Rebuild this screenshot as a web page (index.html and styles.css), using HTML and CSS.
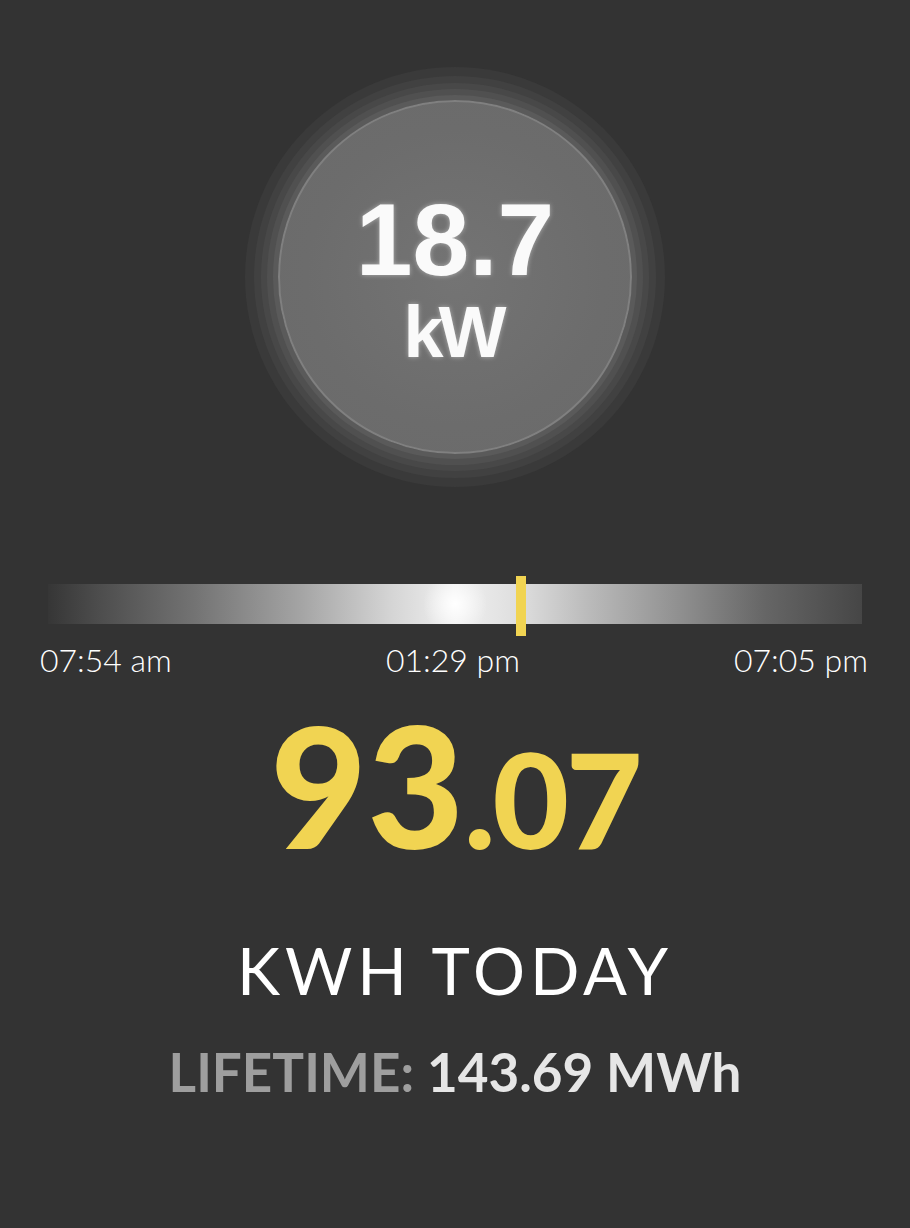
FILE: index.html
```html
<!DOCTYPE html>
<html>

<head>
    <title>Solar Production</title>
    <link rel="stylesheet" href="styles.css">
</head>

<body>
    <div class="gauge">
        <div class="gauge-circle">
            <div class="power-value">18.7</div>
            <div class="power-unit">kW</div>
        </div>
    </div>

    <div class="timeline">
        <div class="sun-bar">
            <div class="now-marker"></div>
        </div>
        <div class="time-labels">
            <span>07:54 am</span>
            <span>01:29 pm</span>
            <span>07:05 pm</span>
        </div>
    </div>

    <div class="energy">
        <div class="energy-value"><span class="whole">93</span><span class="fraction">.07</span></div>
        <div class="energy-label">KWH TODAY</div>
        <div class="lifetime"><span class="lifetime-label">LIFETIME:</span> 143.69 MWh</div>
    </div>
</body>

</html>
```

FILE: styles.css
```css
body {
    margin: 0;
    background-color: #333333;
    font-family: "Lato", "Open Sans", sans-serif;
    color: #fff;
}

/* power gauge */
.gauge {
    display: flex;
    justify-content: center;
    padding-top: 100px;
}

.gauge-circle {
    width: 354px;
    height: 354px;
    box-sizing: border-box;
    border-radius: 50%;
    border: 2px solid #808080;
    background: radial-gradient(circle, #747474 0%, #6c6c6c 60%, #6a6a6a 100%);
    box-shadow:
        0 0 0 5px #5a5a5a,
        0 0 0 11px #505050,
        0 0 0 17px #484848,
        0 0 0 24px #414141,
        0 0 0 33px #3a3a3a;
    display: flex;
    flex-direction: column;
    align-items: center;
    justify-content: center;
    gap: 5px;
    padding-top: 2px;
    font-family: "Liberation Sans", Arial, sans-serif;
    font-weight: bold;
    color: #fafafa;
    text-shadow: 0 0 5px rgba(255, 255, 255, 0.45);
}

.power-value {
    font-size: 102px;
    line-height: 1;
}

.power-unit {
    font-size: 72px;
    line-height: 1;
    letter-spacing: -5px;
    text-indent: -5px;
}

/* daylight bar */
.timeline {
    margin-top: 130px;
}

.sun-bar {
    position: relative;
    margin: 0 48px;
    height: 40px;
    background:
        radial-gradient(circle at 50% 50%, #ffffff 0, rgba(255, 255, 255, 0) 32px),
        linear-gradient(to right, #363636 0%, #4c4c4c 6%, #737373 18%, #a4a4a4 31%, #d4d4d4 42%, #f0f0f0 50%, #dedede 58%, #bcbcbc 66%, #8e8e8e 78%, #666666 88%, #464646 100%);
}

.now-marker {
    position: absolute;
    left: 468px;
    top: -8px;
    width: 10px;
    height: 60px;
    background-color: #f1d452;
}

.time-labels {
    display: flex;
    justify-content: space-between;
    padding: 0 42px 0 40px;
    margin-top: 20px;
    font-size: 32px;
    font-weight: 300;
    line-height: 32px;
}

/* energy totals */
.energy {
    text-align: center;
}

.energy-value {
    margin-top: 25px;
    color: #f1d452;
    font-weight: 900;
    line-height: 167px;
    height: 167px;
}

.energy-value .whole {
    font-size: 167px;
    letter-spacing: 0;
}

.energy-value .fraction {
    font-size: 132px;
    letter-spacing: -3px;
}

.energy-label {
    margin-top: 70px;
    font-size: 65px;
    line-height: 1;
    letter-spacing: 5px;
}

.lifetime {
    margin-top: 42px;
    font-size: 53px;
    line-height: 1;
    font-weight: bold;
    color: #e6e6e6;
}

.lifetime-label {
    color: #9e9e9e;
}
```
